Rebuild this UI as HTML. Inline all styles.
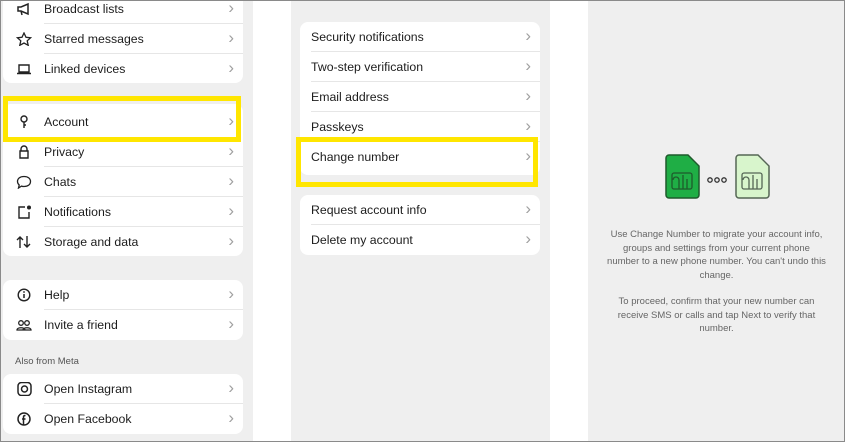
<!DOCTYPE html>
<html><head><style>
*{margin:0;padding:0;box-sizing:border-box}
body{width:845px;height:442px;overflow:hidden;background:#fff;font-family:"Liberation Sans",sans-serif;color:#1c1c1c;position:relative}
.frame{position:absolute;inset:0;border:1px solid #8a8a8a;z-index:10;pointer-events:none}
.pane{position:absolute;top:0;bottom:0;background:#efefef}
.card{position:absolute;background:#fff;border-radius:8px;overflow:hidden}
.row{position:absolute;left:0;right:0;height:30px;font-size:12.3px;line-height:30px}
.row .t{position:absolute}
.row .c{position:absolute;right:9px;color:#a0a0a0;font-size:17px;line-height:28px}
.row .sep{position:absolute;bottom:0;right:0;height:1px;background:#e6e6e6}
.ic{position:absolute;left:13px;top:8px;width:16px;height:14px}
.yb{position:absolute;border:5px solid #ffe600;z-index:5}
.note{position:absolute;left:588px;width:257px;text-align:center;font-size:9.5px;line-height:13.5px;color:#666}
</style></head><body>
<div class="pane" style="left:0;width:253px"></div>
<div class="pane" style="left:291px;width:259px"></div>
<div class="pane" style="left:588px;width:257px"></div>

<div class="card" style="left:3px;top:-10px;width:240px;height:93px">
 <div class="row" style="top:4px"><svg class="ic" viewBox="0 0 16 14"><path d="M2 5h3l7-3v10l-7-3H2z M5 9l1 4" fill="none" stroke="#222" stroke-width="1.5"/></svg><span class="t" style="left:41px">Broadcast lists</span><span class="c">›</span><div class="sep" style="left:41px"></div></div>
 <div class="row" style="top:34px"><svg class="ic" viewBox="0 0 16 14"><path d="M8 1l2 4.3 4.6.5-3.4 3 1 4.5L8 11l-4.2 2.3 1-4.5-3.4-3 4.6-.5z" fill="none" stroke="#222" stroke-width="1.3"/></svg><span class="t" style="left:41px">Starred messages</span><span class="c">›</span><div class="sep" style="left:41px"></div></div>
 <div class="row" style="top:64px"><svg class="ic" viewBox="0 0 16 14"><path d="M3 3h10v7H3z M1 11.5h14" fill="none" stroke="#222" stroke-width="1.4"/></svg><span class="t" style="left:41px">Linked devices</span><span class="c">›</span></div>
</div>
<div class="card" style="left:3px;top:104px;width:240px;height:152px">
 <div class="row" style="top:3px"><svg class="ic" viewBox="0 0 16 14"><circle cx="8" cy="4" r="3" fill="none" stroke="#222" stroke-width="1.4"/><path d="M8 7v6 M8 10h2" stroke="#222" stroke-width="1.4"/></svg><span class="t" style="left:41px">Account</span><span class="c">›</span></div>
 <div class="row" style="top:33px"><svg class="ic" viewBox="0 0 16 14"><path d="M5 6V4a3 3 0 0 1 6 0v2 M4 6h8v7H4z" fill="none" stroke="#222" stroke-width="1.4"/></svg><span class="t" style="left:41px">Privacy</span><span class="c">›</span><div class="sep" style="left:41px"></div></div>
 <div class="row" style="top:63px"><svg class="ic" viewBox="0 0 16 14"><path d="M8 1.5c4 0 6.5 2 6.5 5s-2.5 5-6.5 5c-1 0-2-.2-2.5-.4L2.5 13l.7-3C2 9 1.5 8 1.5 6.5c0-3 2.5-5 6.5-5z" fill="none" stroke="#222" stroke-width="1.3"/></svg><span class="t" style="left:41px">Chats</span><span class="c">›</span><div class="sep" style="left:41px"></div></div>
 <div class="row" style="top:93px"><svg class="ic" viewBox="0 0 16 14"><path d="M9 2H3v11h10V7" fill="none" stroke="#222" stroke-width="1.4"/><circle cx="13" cy="2.5" r="2" fill="#222"/></svg><span class="t" style="left:41px">Notifications</span><span class="c">›</span><div class="sep" style="left:41px"></div></div>
 <div class="row" style="top:123px"><svg class="ic" viewBox="0 0 16 14"><path d="M4 13V2 M1 5l3-3 3 3 M11 1v11 M8 9l3 3 3-3" fill="none" stroke="#222" stroke-width="1.4"/></svg><span class="t" style="left:41px">Storage and data</span><span class="c">›</span></div>
</div>
<div class="yb" style="left:3px;top:96px;width:238px;height:46px"></div>
<div class="card" style="left:3px;top:280px;width:240px;height:60px">
 <div class="row" style="top:0"><svg class="ic" viewBox="0 0 16 14"><circle cx="8" cy="7" r="5.8" fill="none" stroke="#222" stroke-width="1.4"/><path d="M8 6v4" stroke="#222" stroke-width="1.5"/><circle cx="8" cy="4" r=".9" fill="#222"/></svg><span class="t" style="left:41px">Help</span><span class="c">›</span><div class="sep" style="left:41px"></div></div>
 <div class="row" style="top:30px"><svg class="ic" viewBox="0 0 16 14"><circle cx="5" cy="5" r="2.3" fill="none" stroke="#222" stroke-width="1.3"/><circle cx="11" cy="5" r="2.3" fill="none" stroke="#222" stroke-width="1.3"/><path d="M1 12c0-3 8-3 8 0z M7 12c0-3 8-3 8 0z" fill="none" stroke="#222" stroke-width="1.3"/></svg><span class="t" style="left:41px">Invite a friend</span><span class="c">›</span></div>
</div>
<div style="position:absolute;left:15px;top:356px;font-size:9.5px;color:#555">Also from Meta</div>
<div class="card" style="left:3px;top:374px;width:240px;height:60px">
 <div class="row" style="top:0"><svg class="ic" viewBox="0 0 16 14"><rect x="2" y="0.5" width="13" height="13" rx="3.5" fill="none" stroke="#222" stroke-width="1.5"/><circle cx="8.5" cy="7" r="3" fill="none" stroke="#222" stroke-width="1.5"/></svg><span class="t" style="left:41px">Open Instagram</span><span class="c">›</span><div class="sep" style="left:41px"></div></div>
 <div class="row" style="top:30px"><svg class="ic" viewBox="0 0 16 14"><circle cx="8" cy="7" r="6" fill="none" stroke="#222" stroke-width="1.5"/><path d="M9.5 3.5H9c-1 0-1.5.5-1.5 1.5v8 M6 7h3.5" fill="none" stroke="#222" stroke-width="1.5"/></svg><span class="t" style="left:41px">Open Facebook</span><span class="c">›</span></div>
</div>

<div class="card" style="left:300px;top:22px;width:240px;height:153px">
 <div class="row" style="top:0"><span class="t" style="left:11px">Security notifications</span><span class="c">›</span><div class="sep" style="left:11px"></div></div>
 <div class="row" style="top:30px"><span class="t" style="left:11px">Two-step verification</span><span class="c">›</span><div class="sep" style="left:11px"></div></div>
 <div class="row" style="top:60px"><span class="t" style="left:11px">Email address</span><span class="c">›</span><div class="sep" style="left:11px"></div></div>
 <div class="row" style="top:90px"><span class="t" style="left:11px">Passkeys</span><span class="c">›</span><div class="sep" style="left:11px"></div></div>
 <div class="row" style="top:120px"><span class="t" style="left:11px">Change number</span><span class="c">›</span></div>
</div>
<div class="yb" style="left:296px;top:137px;width:242px;height:50px"></div>
<div class="card" style="left:300px;top:195px;width:240px;height:60px">
 <div class="row" style="top:0"><span class="t" style="left:11px">Request account info</span><span class="c">›</span><div class="sep" style="left:11px"></div></div>
 <div class="row" style="top:30px"><span class="t" style="left:11px">Delete my account</span><span class="c">›</span></div>
</div>

<svg style="position:absolute;left:664px;top:153px" width="110" height="47" viewBox="0 0 110 47">
 <path d="M5 2h19l11 11v29a3 3 0 0 1-3 3H5a3 3 0 0 1-3-3V5a3 3 0 0 1 3-3z" fill="#1fae45" stroke="#1f5a2c" stroke-width="1.5"/>
 <path d="M10 20h16a2 2 0 0 1 2 2v12a2 2 0 0 1-2 2H10a2 2 0 0 1-2-2V22a2 2 0 0 1 2-2z M15 36v-9a3 3 0 0 0-6 0 M19 22v14 M23 36v-10" fill="none" stroke="#1f5a2c" stroke-width="1.3"/>
 <circle cx="46" cy="27" r="2.2" fill="none" stroke="#333" stroke-width="1.3"/>
 <circle cx="53" cy="27" r="2.2" fill="none" stroke="#333" stroke-width="1.3"/>
 <circle cx="60" cy="27" r="2.2" fill="none" stroke="#333" stroke-width="1.3"/>
 <path d="M75 2h19l11 11v29a3 3 0 0 1-3 3H75a3 3 0 0 1-3-3V5a3 3 0 0 1 3-3z" fill="#d8f5cc" stroke="#556655" stroke-width="1.5"/>
 <path d="M80 20h16a2 2 0 0 1 2 2v12a2 2 0 0 1-2 2H80a2 2 0 0 1-2-2V22a2 2 0 0 1 2-2z M85 36v-9a3 3 0 0 0-6 0 M89 22v14 M93 36v-10" fill="none" stroke="#556655" stroke-width="1.3"/>
</svg>
<div class="note" style="top:228px">Use Change Number to migrate your account info,<br>groups and settings from your current phone<br>number to a new phone number. You can't undo this<br>change.</div>
<div class="note" style="top:295px">To proceed, confirm that your new number can<br>receive SMS or calls and tap Next to verify that<br>number.</div>
<div class="frame"></div>
</body></html>
